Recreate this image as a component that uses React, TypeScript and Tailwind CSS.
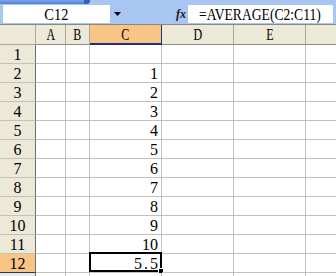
import React from "react";

const cols = [
  { key: "A", w: "w-[30px]" },
  { key: "B", w: "w-[24px]" },
  { key: "C", w: "w-[72px]" },
  { key: "D", w: "w-[72px]" },
  { key: "E", w: "w-[72px]" },
];

const values: Record<number, string> = {
  2: "1", 3: "2", 4: "3", 5: "4", 6: "5", 7: "6", 8: "7", 9: "8", 10: "9", 11: "10",
};

function CellValue({ r }: { r: number }) {
  if (r === 12) {
    return (
      <span className="inline-flex">
        <span>5</span>
        <span className="inline-block w-[8px] text-center">.</span>
        <span>5</span>
      </span>
    );
  }
  return values[r] ? <span>{values[r]}</span> : null;
}

export default function App() {
  const rows = Array.from({ length: 13 }, (_, i) => i + 1);
  return (
    <div className="w-[336px] h-[276px] overflow-hidden bg-white font-['Liberation_Serif',serif] text-[16px] text-black">
      {/* formula toolbar */}
      <div className="h-[24px] bg-[#a9c5f2] flex flex-col">
        <div className="h-[5px] flex">
          <div className="w-[84px] h-[4px] bg-gradient-to-b from-[#7aa4ec] to-[#4f7fd8]" />
          <div className="w-[6px] h-[4px] bg-[#2f5fbf] rounded-br-[3px]" />
        </div>
        <div className="h-[18px] flex items-stretch">
          <div className="ml-[3px] w-[107px] bg-white flex items-end justify-center leading-[16px]">
            <span className="inline-block scale-x-90">C12</span>
          </div>
          <div className="w-[78px] flex items-center">
            <svg width="8" height="5" viewBox="0 0 8 5" className="ml-[4px] mt-[1px]">
              <polygon points="0,0 7,0 3.5,4" fill="#000" />
            </svg>
            <span className="ml-[54px] italic font-bold text-[12px] text-[#1a1a1a] leading-none">fx</span>
          </div>
          <div className="flex-1 mr-[3px] bg-white flex items-end pl-[11px] leading-[16px] overflow-hidden">
            <span className="inline-block whitespace-nowrap origin-left scale-x-[0.85]">=AVERAGE(C2:C11)</span>
          </div>
        </div>
        <div className="h-[1px]" />
      </div>

      {/* header row */}
      <div className="flex h-[21px] border-t border-[#8c8a7c]">
        <div className="w-[36px] h-[20px] bg-[#ece9d8] border-r border-b border-[#aca899]" />
        {cols.map((c) => (
          <div
            key={c.key}
            className={
              c.key === "C"
                ? `${c.w} h-[20px] bg-[#f8c587] border-r border-r-[#1f2f7a] border-b-2 border-b-[#1f2f7a] flex items-end justify-center leading-[16px]`
                : `${c.w} h-[20px] bg-[#ece9d8] border-r border-b border-[#aca899] border-b-[#8c8a7c] flex items-end justify-center leading-[16px] pb-[1px]`
            }
          >
            <span className="inline-block scale-x-75">{c.key}</span>
          </div>
        ))}
        <div className="flex-1 h-[20px] bg-[#ece9d8] border-b border-[#8c8a7c]" />
      </div>

      {rows.map((r) => {
        const sel = r === 12;
        return (
          <div key={r} className="flex h-[19px]">
            <div
              className={
                sel
                  ? "w-[36px] h-[19px] bg-[#f8c587] border-r border-r-[#716f64] border-b border-b-[#1f2f7a] flex items-end justify-center leading-[16px]"
                  : "w-[36px] h-[19px] bg-[#ece9d8] border-r border-r-[#716f64] border-b border-b-[#c5c2b2] flex items-end justify-center leading-[16px]"
              }
            >
              {r <= 12 ? r : null}
            </div>
            {cols.map((c) => (
              <div
                key={c.key}
                className={`${c.w} h-[19px] border-r border-b border-[#c0c0c0] relative flex items-end justify-end leading-[16px] pr-[3px]`}
              >
                {c.key === "C" ? <CellValue r={r} /> : null}
                {c.key === "C" && sel ? (
                  <div className="absolute left-[-1px] top-[-2px] w-[73px] h-[20px] border-2 border-black">
                    <div className="absolute right-[-4px] bottom-[-4px] w-[6px] h-[6px] bg-black border border-white" />
                  </div>
                ) : null}
              </div>
            ))}
            <div className="flex-1 h-[19px] border-b border-[#c0c0c0]" />
          </div>
        );
      })}
    </div>
  );
}
